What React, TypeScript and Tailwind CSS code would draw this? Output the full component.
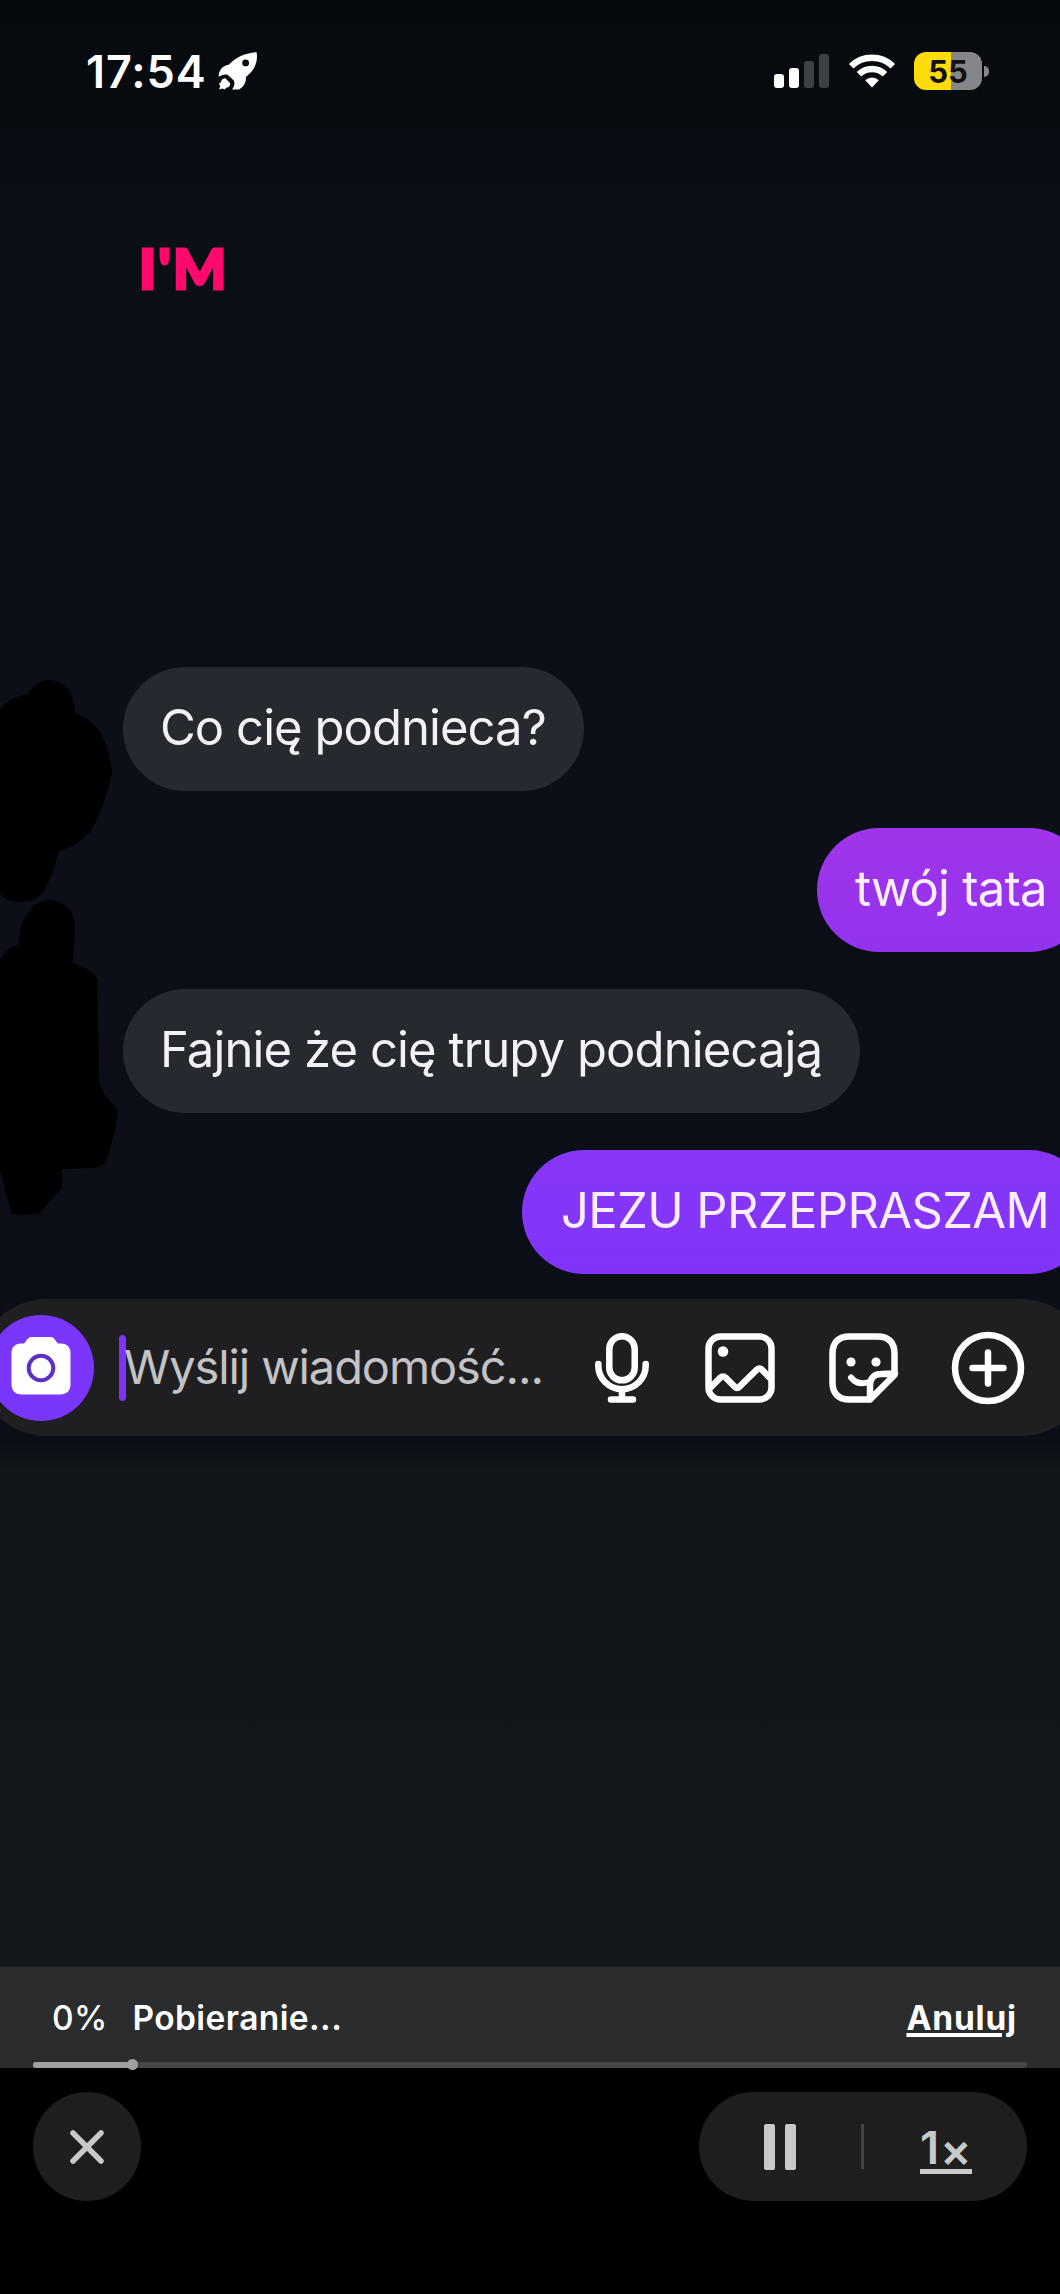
import React from "react";

interface MessageProps {
  text: string;
  mine?: boolean;
  className?: string;
}

function Message({ text, mine = false, className = "" }: MessageProps) {
  return (
    <div
      className={`flex h-[124px] shrink-0 items-center rounded-full pb-[3px] whitespace-nowrap text-[49px] ${
        mine ? "self-end text-[#fbeeff]" : "self-start bg-[#272931] text-[#f1f2f6]"
      } ${className}`}
    >
      <span>{text}</span>
    </div>
  );
}

function StatusBar() {
  return (
    <header className="flex h-[140px] items-center justify-between pt-[2px] pr-[71px] pl-[86px] text-white">
      <div className="flex items-center gap-[11px]">
        <span className="text-[45px] leading-none font-semibold tracking-[0.9px]">17:54</span>
        <svg className="h-10 w-[41px]" viewBox="8 7 42 40" fill="currentColor">
          <path
            fillRule="evenodd"
            d="M47.500 7.800C49 15 46.500 23.500 41.500 28.500L36.500 33.500C37 39 34 43.500 29.500 46H22.500C25 42 25.500 39.500 24 36.500L17.500 30.500C14 30.500 11.500 31 8.800 33C8.500 27 12 21.500 19 20.500C27 12.500 36.500 8.500 47.500 7.800ZM36.300 15.200a3.500 3.500 0 1 0 0 7a3.500 3.500 0 0 0 0-7Z"
          />
          <path d="M15.500 34.500L20.500 39.500C20.500 42 19 44.300 16.800 44L15 46L12.500 45L9 46L10.300 42.500L9 40L11 38.500C11.500 36 13 34.500 15.500 34.500Z" />
        </svg>
      </div>

      <div className="flex items-center">
        {/* Signal */}
        <div className="flex h-[34px] items-end gap-[5px]">
          <div className="h-[14px] w-[10px] rounded-[3px] bg-white" />
          <div className="h-5 w-[10px] rounded-[3px] bg-white" />
          <div className="h-[27px] w-[10px] rounded-[3px] bg-[#3d4044]" />
          <div className="h-[34px] w-[10px] rounded-[3px] bg-[#3d4044]" />
        </div>

        {/* Wifi */}
        <svg className="ml-[19px] h-[36px] w-[48px]" viewBox="0 0 48 36" fill="none" stroke="white" strokeWidth="6.400">
          <path d="M3.200 13.200a30 30 0 0 1 41.600 0" />
          <path d="M11 21.300a18.600 18.600 0 0 1 26 0" />
          <path d="M17.200 27.200a9.800 9.800 0 0 1 13.600 0L24 34.600z" fill="white" stroke="none" />
        </svg>

        {/* Battery */}
        <div className="ml-[18px] flex h-[38px] w-[68px] items-center justify-center rounded-[12px] bg-[linear-gradient(90deg,#ffdc0a_54%,#85868a_54%)]">
          <span className="text-[31px] leading-none font-bold text-[#111]">55</span>
        </div>
        <div className="ml-[2px] h-[11px] w-[5px] rounded-r-full bg-[#85868a]" />
      </div>
    </header>
  );
}

function Composer() {
  return (
    <div className="-ml-[22px] flex h-[137px] w-[1112px] shrink-0 items-center rounded-full bg-[#1f1f22] pl-[10px]">
      <div className="flex h-[106px] w-[106px] shrink-0 items-center justify-center rounded-full bg-[#7b36fc]">
        <svg className="h-[58px] w-[60px] -translate-y-[2px]" viewBox="0 0 60 58">
          <path
            d="M20 0h20c3 0 4.500 4 7 6.500h3c6 0 9.500 4 9.500 9.500v31c0 7-4 10.500-10.500 10.500H11C4.500 57.500.5 54 .5 47V16C.5 10.500 4 6.500 10 6.500h3C15.500 4 17 0 20 0Z"
            fill="white"
          />
          <circle cx="30" cy="31" r="12.300" fill="none" stroke="#5f2fc4" strokeWidth="4" />
        </svg>
      </div>
      <div className="ml-[25px] h-[66px] w-[7px] shrink-0 rounded-full bg-[#7c35f5]" />
      <span className="-ml-[2px] w-[471px] text-[47px] tracking-[-1.1px] whitespace-nowrap text-[#c3c3c6]">
        Wyślij wiadomość...
      </span>

      <div className="flex shrink-0 items-center text-white">
        {/* Mic */}
        <svg className="h-[70px] w-[54px]" viewBox="0 0 54 70" fill="none" stroke="currentColor" strokeWidth="6.500" strokeLinecap="round">
          <rect x="14.300" y="3.300" width="25.400" height="44" rx="12.700" />
          <path d="M3.300 31v1.500a23.700 23.700 0 0 0 47.400 0V31M27 57v9M16 66.500h22" />
        </svg>
        {/* Photo */}
        <svg className="ml-14 h-[70px] w-[70px]" viewBox="0 0 70 70" fill="none" stroke="currentColor" strokeWidth="6.500" strokeLinejoin="round">
          <rect x="3.500" y="3.500" width="63" height="63" rx="12" />
          <circle cx="18" cy="18.500" r="5.300" fill="currentColor" stroke="none" />
          <path d="M4 56l11.500-11.500c1.500-1.500 3.500-1.500 5 0l9.500 9.500c1.200 1.200 3 1.200 4.200 0L52 36.500c1.400-1.400 3.300-1.400 4.700 0L66 46" />
        </svg>
        {/* Sticker */}
        <svg className="ml-[54px] h-[70px] w-[70px]" viewBox="0 0 70 70" fill="none" stroke="currentColor" strokeWidth="6.500" strokeLinecap="round" strokeLinejoin="round">
          <path d="M41 66.500H20.500c-11 0-17-6-17-17v-29c0-11 6-17 17-17h28c11 0 17 6 17 17V42L41 66.500V52.500c0-7 4-11.500 11-11.500l14-.5" />
          <path d="M22 44.500c4.500 5.500 11 7 18 4.500" strokeWidth="6" />
          <circle cx="22" cy="29" r="4.600" fill="currentColor" stroke="none" />
          <circle cx="47" cy="29" r="4.600" fill="currentColor" stroke="none" />
        </svg>
        {/* Add */}
        <svg className="ml-[52px] h-[74px] w-[74px]" viewBox="0 0 74 74" fill="none" stroke="currentColor" strokeWidth="6.500" strokeLinecap="round">
          <circle cx="37" cy="37" r="33" />
          <path d="M37 21.500v31M21.500 37h31" />
        </svg>
      </div>
    </div>
  );
}

// Hand-painted marks that hide the avatars
function Scribbles() {
  return (
    <svg className="absolute top-[670px] left-0 h-[560px] w-[130px]" viewBox="0 670 130 560" fill="#000">
      <path d="M0 709Q10 697 28 694Q36 679 52 680Q74 684 75 713Q94 720 101 734Q110 752 112 772Q110 785 104 802Q98 820 90 832Q78 845 59 852Q55 862 54 869Q49 880 46 887Q40 898 30 901Q12 905 0 894Z" />
      <path d="M0 960Q6 948 18 945Q21 905 48 900Q73 902 75 925L73 963Q90 968 97 978L99 1080Q101 1093 118 1110Q115 1135 107 1160Q103 1168 92 1168L62 1169V1187L40 1213Q26 1216 12 1214Q5 1190 0 1170Z" />
    </svg>
  );
}

function DownloadBar() {
  return (
    <div className="relative h-[101px] shrink-0 bg-[#2b2c2e]">
      <div className="flex h-[101px] items-start justify-between pt-7 pr-[43px] pl-[52px] text-[33.500px] leading-[46px] font-semibold text-white">
        <div className="flex gap-[25px]">
          <span className="font-medium tracking-[0.3px]">0%</span>
          <span className="tracking-[0.400px]">Pobieranie...</span>
        </div>
        <span className="font-bold tracking-[0.800px] underline decoration-4 underline-offset-[3px]">Anuluj</span>
      </div>
      <div className="absolute right-[33px] bottom-0 left-[33px] h-[6px] rounded-full bg-[#464646]">
        <div className="h-full w-[100px] rounded-full bg-[#a0a0a0]" />
        <div className="absolute -top-[3px] left-[94px] h-[11px] w-[11px] rounded-full bg-[#a0a0a0]" />
      </div>
    </div>
  );
}

function PlayerControls() {
  return (
    <div className="flex h-[226px] shrink-0 items-start justify-between bg-black px-[33px] pt-6 text-[#c9c9c9]">
      <button className="flex h-[109px] w-[108px] items-center justify-center rounded-full bg-[#1e1e1e]">
        <svg className="h-[36px] w-[36px]" viewBox="0 0 36 36" stroke="currentColor" strokeWidth="5.500" strokeLinecap="round">
          <path d="M4 4l28 28M32 4L4 32" />
        </svg>
      </button>
      <div className="flex h-[109px] w-[328px] items-center rounded-full bg-[#1e1e1e] pl-[65px]">
        <div className="flex gap-[10px]">
          <div className="h-[46px] w-[11px] rounded-[2px] bg-current" />
          <div className="h-[46px] w-[11px] rounded-[2px] bg-current" />
        </div>
        <div className="ml-[65px] h-[45px] w-[3px] bg-[#444]" />
        <div className="mt-[6px] ml-[56px] flex h-[48px] w-[52px] items-start border-b-[5px] border-current text-[45px] leading-[44px] font-semibold">
          <span>1</span>
          <span className="ml-px text-[47px] leading-[48px]">×</span>
        </div>
      </div>
    </div>
  );
}

export default function App() {
  return (
    <div className="relative flex h-[2294px] w-[1060px] flex-col overflow-hidden bg-[#0b0e16] font-['Inter','Liberation_Sans',sans-serif]">
      <main className="flex h-[1967px] shrink-0 flex-col bg-[linear-gradient(180deg,#06090d_0px,#0a0e15_200px,#0c0f17_800px,#0b0e16_1440px,#111418_1470px,#14181b_1967px)]">
        <StatusBar />
        <div className="mt-[97px] ml-[139px] h-[430px] font-['Lato',sans-serif] text-[56px] leading-[62px] font-black tracking-[2.500px] text-[#ff0a6c] [-webkit-text-stroke:3px_#ff0a6c] [paint-order:stroke]">
          I'M
        </div>

        <div className="flex flex-col gap-[37px]">
          <Message className="ml-[123px] w-[461px] pl-[37px] tracking-[-0.950px]" text="Co cię podnieca?" />
          <Message mine className="-mr-[31px] w-[274px] bg-linear-to-b from-[#a034ea] to-[#9333ee] pl-[38px] tracking-[-0.750px]" text="twój tata" />
          <Message className="ml-[123px] w-[737px] pl-[37px] tracking-[-0.900px]" text="Fajnie że cię trupy podniecają" />
          <Message mine className="-mr-[31px] w-[569px] bg-linear-to-b from-[#8836f6] to-[#8034fa] pl-[39px] tracking-[-0.650px]" text="JEZU PRZEPRASZAM" />
        </div>

        <div className="mt-[25px]">
          <Composer />
        </div>
      </main>
      <Scribbles />
      <DownloadBar />
      <PlayerControls />
    </div>
  );
}
